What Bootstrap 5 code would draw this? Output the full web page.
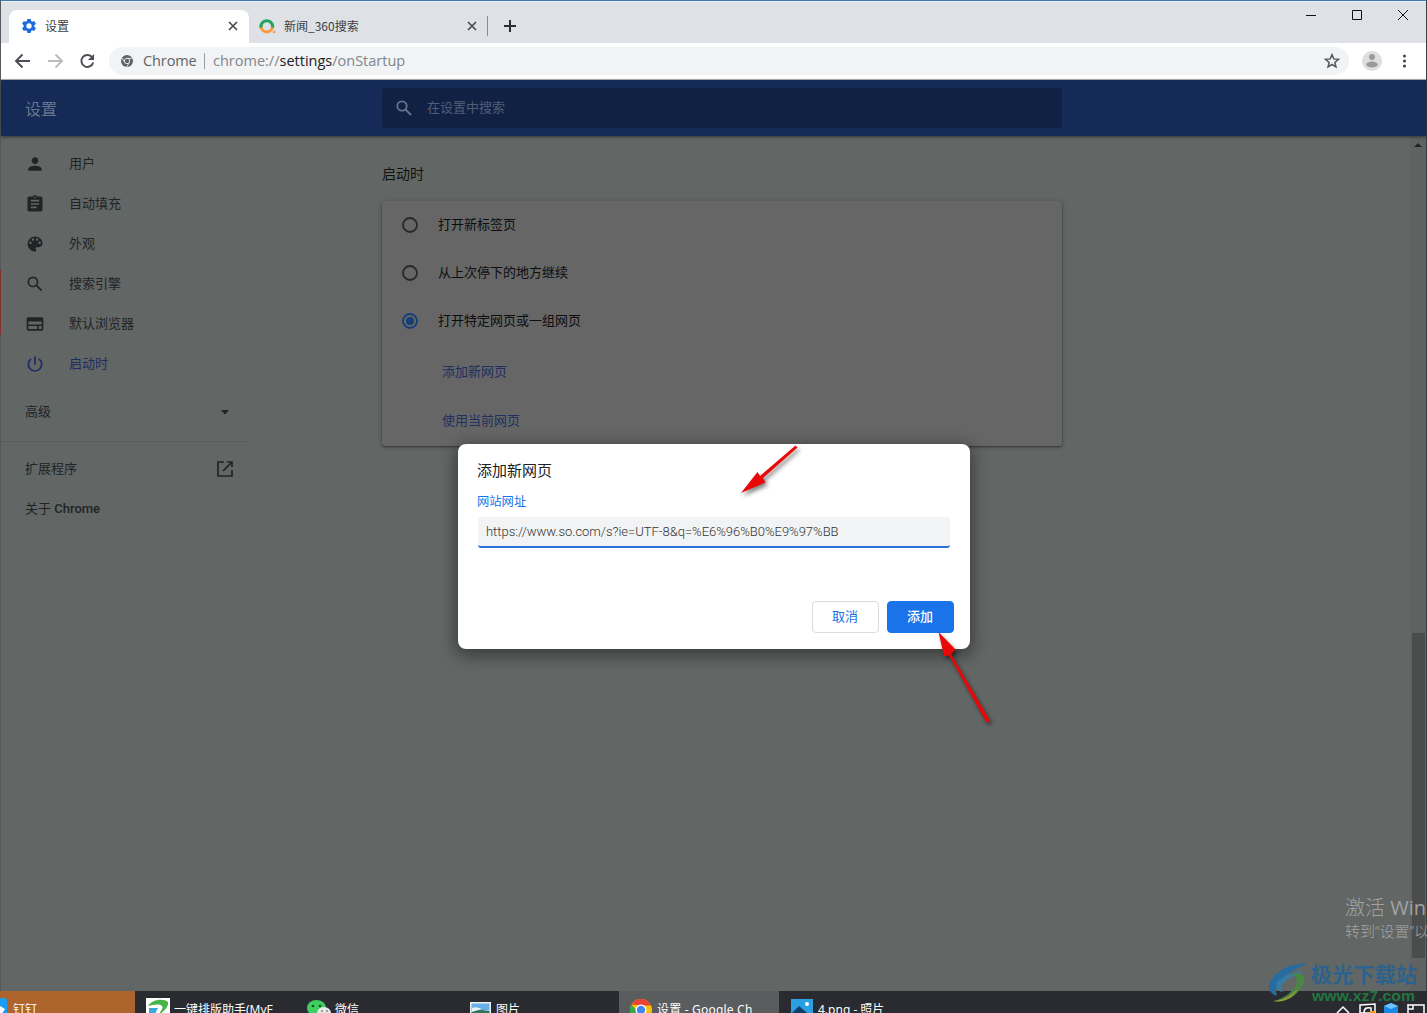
<!DOCTYPE html>
<html lang="zh-CN">
<head>
    <meta charset="UTF-8">
    <meta name="viewport" content="width=device-width, initial-scale=1.0">
    <title>设置</title>
    <link href="https://cdn.jsdelivr.net/npm/bootstrap@5.3.0/dist/css/bootstrap.min.css" rel="stylesheet">
    <style>
        body {
            width: 1427px;
            height: 1013px;
            overflow: hidden;
            background: #626664;
            color: #17191a;
            font-family: Roboto, "Noto Sans CJK SC", sans-serif;
            font-size: 13px;
            line-height: 20px;
        }
        svg { display: block; flex: none; }
        .desk { height: 1013px; }
        .app-window { height: 991px; border-top: 1px solid #3f78ae; border-left: 1px solid #55595b; border-right: 1px solid #3b3e40; }

        /* Tab strip */
        .tab-strip { height: 42px; background: #dee1e6; padding: 8px 0 0 8px; border-top: 1px solid #e9f3fb; }
        .tab { height: 34px; padding-bottom: 2px; font-family: "Noto Sans CJK SC", sans-serif; font-size: 12px; color: #3c4043; }
        .tab-active { width: 240px; background: #fff; border-radius: 8px 8px 0 0; padding: 0 9px 2px 12px; }
        .tab-other { width: 238px; padding: 0 8px 2px 10px; }
        .tab-sep { width: 1px; height: 20px; background: #888c91; }
        .win-buttons { height: 28px; margin-top: -10px; }

        /* Toolbar */
        .toolbar { height: 37px; background: #fff; border-bottom: 1px solid #b4b5b7; }
        .omnibox { width: 1240px; height: 28px; border-radius: 14px; background: #f1f3f4; font-family: "Open Sans", sans-serif; font-size: 14.5px; color: #5f6368; }
        .omni-name { width: 57px; margin-left: 2px; letter-spacing: -.1px; }
        .omni-sep { width: 1px; height: 16px; background: #9a9ea2; }
        .omni-url { color: #80868b; }
        .omni-url b { color: #202124; font-weight: 400; }

        /* Settings header */
        .settings-bar { height: 56px; background: #152a56; color: #69748c; box-shadow: 0 1px 3px rgba(0,0,0,.5); position: relative; }
        .settings-title { width: 381px; padding: 3px 0 0 24px; font-size: 16px; }
        .settings-search { width: 680px; height: 40px; background: #112144; border-radius: 2px; padding-left: 13px; color: #515d76; }
        .search-text { margin-left: 14px; padding-bottom: 1px; }

        /* Side menu */
        .side { width: 248px; padding-top: 8px; color: #202426; }
        .side-item { height: 40px; padding-left: 24px; padding-right: 15px; }
        .side-item svg { margin-right: 24px; }
        .side-item .end-icon { margin-right: 0; }
        .side-active { color: #1d2b66; }
        .side-line { height: 1px; background: #595d5b; margin: 9px 0 7px; }

        /* Startup card */
        .main-col { width: 680px; margin-left: 133px; }
        .main-title { font-size: 14px; padding-top: 28px; height: 65px; color: #101212; }
        .start-card { height: 245px; background: #666; border-radius: 3px; box-shadow: 0 1px 2px rgba(0,0,0,.4), 0 1px 5px rgba(0,0,0,.2); color: #0d0d0e; }
        .start-row { height: 48px; padding-left: 20px; }
        .start-row svg { margin-right: 20px; }
        .start-link { height: 49px; padding: 4px 0 0 60px; color: #202f60; }
        .scroll-track { width: 16px; background: #606261; }
        .scroll-thumb { width: 13px; height: 325px; background: #4b4c4c; margin-top: 485px; }

        /* Dialog */
        .add-dialog { position: absolute; left: 458px; top: 444px; width: 512px; height: 205px; background: #fff; border-radius: 8px; box-shadow: 0 4px 16px 3px rgba(0,0,0,.4); padding: 17px 16px 16px 20px; }
        .dialog-title { font-size: 15px; color: #202124; margin-left: -1px; }
        .dialog-label { font-size: 12.3px; color: #1a73e8; margin: 12px 0 0 -1px; line-height: 18px; }
        .url-box { width: 472px; height: 31px; margin-top: 6px; padding: 0 8px; background: #f1f3f4; border: 0; border-bottom: 2px solid #2a6fdb; border-radius: 3px; color: #333; font-weight: 300; font-size: 13px; letter-spacing: -.02px; outline: 0; }
        .dialog-btn { width: 67px; height: 32px; font-size: 13px; line-height: 18px; padding: 0 1px 1px 0; border-radius: 4px; border: 1px solid #dadce0; color: #1a73e8; background: #fff; }
        .dialog-btn-add { background: #1a73e8; border-color: #1a73e8; color: #fff; font-weight: 500; }
        .arrows { position: absolute; left: 730px; top: 436px; filter: drop-shadow(2px 3px 2px rgba(0,0,0,.5)); }

        /* Taskbar */
        .taskbar { height: 22px; background: #2a2b30; color: #fff; font-family: "Noto Sans", "Noto Sans CJK SC", sans-serif; font-size: 12px; overflow: hidden; }
        .task { height: 38px; white-space: nowrap; flex: none; }
        .task svg { margin-right: 4px; }
        .task-ding { background: #ad642d; width: 135px; }
        .task-ding svg { margin-right: 6px; }
        .task-my { width: 172px; padding-left: 11px; }
        .task-wx { width: 162px; }
        .task-pic { width: 150px; padding-left: 1px; }
        .task-pic svg { margin-right: 5px; }
        .task-chrome { background: #5a5c5e; width: 160px; padding-left: 11px; }
        .task-chrome svg, .task-photo svg { margin-right: 5px; }
        .task-chrome { letter-spacing: .2px; }
        .task-photo { padding-left: 12px; }

        .activate { position: absolute; left: 1345px; top: 893px; width: 82px; overflow: hidden; color: #a1a3a2; font-family: "Open Sans", "Noto Sans CJK SC", sans-serif; font-weight: 300; white-space: nowrap; }
        .activate-big { font-size: 20px; line-height: 30px; }
        .activate-big span { font-weight: 400; }
        .activate-sub { font-size: 15px; line-height: 17px; }
        .site-logo { position: absolute; left: 1266px; top: 958px; }
        .edge-mark { position: absolute; left: 0; top: 270px; width: 1px; height: 65px; background: #84302a; }
    </style>
</head>
<body>
<div class="desk position-relative">
    <div class="app-window d-flex flex-column">
        <!-- Tabs -->
        <div class="tab-strip d-flex align-items-start">
            <div class="tab tab-active d-flex align-items-center">
                <svg width="16" height="16" viewBox="0 0 24 24" fill="#1a6be0"><path fill-rule="evenodd" d="M9.500 1.500h5l.6 3 1.800 1 2.900-1 2.500 4.300-2.300 2.100v2.200l2.300 2.100-2.500 4.300-2.900-1-1.800 1-.6 3h-5l-.6-3-1.800-1-2.900 1-2.500-4.300L4 13.100v-2.200L1.700 8.800l2.500-4.300 2.900 1 1.800-1zM12 8a4 4 0 1 0 0 8 4 4 0 0 0 0-8z"/></svg>
                <span class="ms-2 flex-grow-1">设置</span>
                <svg width="14" height="14" viewBox="0 0 14 14" stroke="#45494d" stroke-width="1.600"><path d="M3 3l8 8M11 3l-8 8"/></svg>
            </div>
            <div class="tab tab-other d-flex align-items-center">
                <svg width="17" height="17" viewBox="0 0 17 17" fill="none" stroke-width="3"><path d="M2 8.500a5.800 5.800 0 0 1 11.600 0" stroke="#1fa762"/><path d="M2 8.200a5.800 5.800 0 0 0 11.600 0" stroke="#f79b3d"/><path d="M2 9.500a5.800 5.800 0 0 1 0-2M13.600 9.500a5.800 5.800 0 0 0 0-2" stroke="#1fa762"/><circle cx="15.200" cy="14" r="1.300" fill="#f79b3d" stroke="none"/></svg>
                <span class="ms-2 flex-grow-1">新闻_360搜索</span>
                <svg width="14" height="14" viewBox="0 0 14 14" stroke="#45494d" stroke-width="1.600"><path d="M3 3l8 8M11 3l-8 8"/></svg>
            </div>
            <div class="tab d-flex align-items-center">
                <div class="tab-sep"></div>
                <svg class="ms-3" width="12" height="12" viewBox="0 0 12 12" stroke="#2b2e31" stroke-width="2"><path d="M6 0v12M0 6h12"/></svg>
            </div>
            <div class="win-buttons d-flex align-items-center ms-auto">
                <svg width="126" height="28" viewBox="0 0 126 28" fill="none" stroke="#111"><path d="M6 15.500h10M52.500 10.500h9v9h-9zM98 10l10 10M108 10l-10 10"/></svg>
            </div>
        </div>

        <!-- Toolbar -->
        <div class="toolbar d-flex align-items-center">
            <svg width="108" height="36" viewBox="0 0 108 36" fill="none" stroke="#4b4f53" stroke-width="1.900">
                <path d="M29 18H15.500M21.500 11.500L15 18l6.500 6.500"/>
                <path d="M47 18h13.500M54.500 11.500L61 18l-6.500 6.500" stroke="#b9bbbe"/>
                <path d="M91.300 14.500a6 6 0 1 0 .9 5"/><path d="M93 11v6h-6z" fill="#4b4f53" stroke="none"/>
            </svg>
            <div class="omnibox d-flex align-items-center">
                <svg class="ms-2" width="20" height="20" viewBox="0 0 20 20" fill="none"><circle cx="10" cy="10" r="6" fill="#5f6368"/><circle cx="10" cy="10" r="2.700" stroke="#dfe1e3" stroke-width="1"/><path d="M10 7.300h5.300M7.700 11.300L5 7M12.300 11.300L9.800 16" stroke="#dfe1e3"/></svg>
                <span class="omni-name ps-1">Chrome</span>
                <div class="omni-sep ms-2 me-2"></div>
                <span class="omni-url flex-grow-1">chrome://<b>settings</b>/onStartup</span>
                <svg class="me-2" width="18" height="18" viewBox="0 0 18 18" fill="none" stroke="#55595d" stroke-width="1.500"><path d="M9 2.600l1.800 4.300 4.700.4-3.600 3.100 1.100 4.600L9 12.500 5 15l1.100-4.600-3.600-3.100 4.700-.4z"/></svg>
            </div>
            <svg class="ms-auto" width="66" height="36" viewBox="0 0 66 36"><circle cx="12" cy="18" r="10" fill="#dddedf"/><circle cx="12" cy="14" r="3" fill="#999"/><ellipse cx="12" cy="21.500" rx="5.700" ry="3" fill="#999"/><g fill="#3f4347"><circle cx="44.500" cy="13" r="1.500"/><circle cx="44.500" cy="18" r="1.500"/><circle cx="44.500" cy="23" r="1.500"/></g></svg>
        </div>

        <!-- Settings header -->
        <div class="settings-bar d-flex align-items-center">
            <div class="settings-title">设置</div>
            <div class="settings-search d-flex align-items-center">
                <svg width="18" height="18" viewBox="0 0 18 18" fill="none" stroke="#68738a" stroke-width="1.800"><circle cx="7" cy="7" r="4.700"/><path d="M10.500 10.500l5.500 5.500"/></svg>
                <span class="search-text">在设置中搜索</span>
            </div>
        </div>

        <!-- Settings page -->
        <div class="d-flex flex-grow-1">
            <nav class="side">
                <div class="side-item d-flex align-items-center">
                    <svg width="20" height="20" viewBox="0 0 24 24" fill="currentColor"><path d="M12 12c2.200 0 4-1.800 4-4s-1.800-4-4-4-4 1.800-4 4 1.800 4 4 4zm0 2c-2.700 0-8 1.300-8 4v2h16v-2c0-2.700-5.300-4-8-4z"/></svg>用户
                </div>
                <div class="side-item d-flex align-items-center">
                    <svg width="20" height="20" viewBox="0 0 24 24" fill="currentColor"><path d="M19 3h-4.200a3 3 0 0 0-5.600 0H5a2 2 0 0 0-2 2v14c0 1.100.9 2 2 2h14a2 2 0 0 0 2-2V5a2 2 0 0 0-2-2zm-7 0a1 1 0 1 1 0 2 1 1 0 0 1 0-2zm2 14H7v-2h7zm3-4H7v-2h10zm0-4H7V7h10z"/></svg>自动填充
                </div>
                <div class="side-item d-flex align-items-center">
                    <svg width="20" height="20" viewBox="0 0 24 24" fill="currentColor"><path d="M12 3a9 9 0 0 0 0 18c.8 0 1.500-.7 1.500-1.500 0-.4-.1-.7-.4-1-.2-.3-.4-.6-.4-1 0-.8.700-1.500 1.500-1.500H16a5 5 0 0 0 5-5c0-4.400-4-8-9-8zm-5.500 9a1.500 1.500 0 1 1 0-3 1.500 1.500 0 0 1 0 3zm3-4a1.500 1.500 0 1 1 0-3 1.500 1.500 0 0 1 0 3zm5 0a1.500 1.500 0 1 1 0-3 1.500 1.500 0 0 1 0 3zm3 4a1.500 1.500 0 1 1 0-3 1.500 1.500 0 0 1 0 3z"/></svg>外观
                </div>
                <div class="side-item d-flex align-items-center">
                    <svg width="20" height="20" viewBox="0 0 24 24" fill="none" stroke="currentColor" stroke-width="2"><circle cx="9.500" cy="9.500" r="5.500"/><path d="M14 14l6 6"/></svg>搜索引擎
                </div>
                <div class="side-item d-flex align-items-center">
                    <svg width="20" height="20" viewBox="0 0 24 24" fill="currentColor"><path fill-rule="evenodd" d="M20 4H4a2 2 0 0 0-2 2v12c0 1.100.9 2 2 2h16a2 2 0 0 0 2-2V6a2 2 0 0 0-2-2zM4 9h16v3.500H4zm0 5.500h10.500V18H4zm12.500 0H20V18h-3.500z"/></svg>默认浏览器
                </div>
                <div class="side-item side-active d-flex align-items-center">
                    <svg width="20" height="20" viewBox="0 0 24 24" fill="none" stroke="currentColor" stroke-width="2"><path d="M12 3v10M7.300 5.900a8 8 0 1 0 9.400 0"/></svg>启动时
                </div>
                <div class="side-item d-flex align-items-center justify-content-between mt-2">
                    高级<svg class="end-icon" width="18" height="18" viewBox="0 0 18 18" fill="currentColor"><path d="M5 7h8l-4 4.500z"/></svg>
                </div>
                <div class="side-line"></div>
                <div class="side-item d-flex align-items-center justify-content-between">
                    扩展程序<svg class="end-icon" width="18" height="18" viewBox="0 0 18 18" fill="none" stroke="currentColor" stroke-width="1.700"><path d="M8 2H2v14h14v-6M11 2h5v5M16 2L7 11"/></svg>
                </div>
                <div class="side-item d-flex align-items-center">关于&nbsp;<span class="fw-medium about-name">Chrome</span></div>
            </nav>

            <div class="main-col">
                <div class="main-title">启动时</div>
                <div class="start-card">
                    <div class="start-row d-flex align-items-center">
                        <svg width="16" height="16" viewBox="0 0 16 16" fill="none" stroke="#262829" stroke-width="1.800"><circle cx="8" cy="8" r="7"/></svg>打开新标签页
                    </div>
                    <div class="start-row d-flex align-items-center">
                        <svg width="16" height="16" viewBox="0 0 16 16" fill="none" stroke="#262829" stroke-width="1.800"><circle cx="8" cy="8" r="7"/></svg>从上次停下的地方继续
                    </div>
                    <div class="start-row d-flex align-items-center">
                        <svg width="16" height="16" viewBox="0 0 16 16" fill="none" stroke="#153d78" stroke-width="1.800"><circle cx="8" cy="8" r="7"/><circle cx="8" cy="8" r="4" fill="#153d78" stroke="none"/></svg>打开特定网页或一组网页
                    </div>
                    <div class="start-link d-flex align-items-center">添加新网页</div>
                    <div class="start-link d-flex align-items-center">使用当前网页</div>
                </div>
            </div>

            <div class="scroll-track ms-auto d-flex flex-column align-items-center">
                <svg width="10" height="12" viewBox="0 0 10 12" fill="#222"><path d="M1 11l4-4 4 4z"/></svg>
                <div class="scroll-thumb"></div>
            </div>
        </div>
    </div>

    <!-- Taskbar -->
    <div class="taskbar d-flex align-items-start">
        <div class="task task-ding d-flex align-items-center">
            <svg width="7" height="24" viewBox="0 0 7 24"><path d="M0 0h4a3 3 0 0 1 3 3v21H0z" fill="#1a9df3"/><path d="M0 8l5 3-4 6H0z" fill="#fff"/></svg>钉钉
        </div>
        <div class="task task-my d-flex align-items-center">
            <svg width="24" height="24" viewBox="0 0 24 24"><path d="M0 0h24v24H0z" fill="#fff"/><path d="M2 8C6 1 18 0 22 4c1 5-4 9-10 14 2-4 6-8 4-10-3-3-9-1-14 0z" fill="#48b548"/><path d="M3 10h9l-5 10H3z" fill="#3ca8d5"/></svg>一键排版助手(MyE
        </div>
        <div class="task task-wx d-flex align-items-center">
            <svg width="24" height="20" viewBox="0 0 24 20"><ellipse cx="9.500" cy="8" rx="9.500" ry="8" fill="#3fce62"/><circle cx="6" cy="6" r="1.300" fill="#184f29"/><circle cx="13" cy="6" r="1.300" fill="#184f29"/><ellipse cx="17" cy="13" rx="7" ry="6" fill="#e9e9e9"/><path d="M14 11h2M19 11h2" stroke="#555"/></svg>微信
        </div>
        <div class="task task-pic d-flex align-items-center">
            <svg width="21" height="16" viewBox="0 0 21 16"><path d="M0 0h21v16H0z" fill="#eee"/><path d="M1.500 1.500h18v7h-18z" fill="#68aee8"/><path d="M1.500 6c5-2 9 3 18 3v6h-18z" fill="#33735e"/><path d="M1.500 6c4-2 9 1 11 1l-11 3z" fill="#e3f3fd"/></svg>图片
        </div>
        <div class="task task-chrome d-flex align-items-center">
            <svg width="22" height="22" viewBox="0 1 22 22"><circle cx="11" cy="12" r="11" fill="#f4c20d"/><path d="M1.500 6.500A11 11 0 0 1 21 7.500H11z" fill="#ea4335"/><path d="M1.500 6.500A11 11 0 0 0 9 23l3-8-6-3z" fill="#34a853"/><circle cx="11" cy="12" r="5.500" fill="#fff"/><circle cx="11" cy="12" r="4.200" fill="#4285f4"/></svg>设置 - Google Ch
        </div>
        <div class="task task-photo d-flex align-items-center">
            <svg width="22" height="22" viewBox="0 0 22 22"><path d="M0 0h22v22H0z" fill="#2aa0e3"/><path d="M0 15l8-8 14 12v3H0z" fill="#123d67"/><circle cx="16" cy="5" r="2" fill="#fff"/></svg>4.png - 照片
        </div>
        <svg class="ms-auto" width="92" height="22" viewBox="0 0 92 22" fill="none" stroke="#fff" stroke-width="1.500"><path d="M2 22l6-6 6 6"/><path d="M25 14l15-1v9H25zM29 22c0-5 3-6 7-5v3"/><path d="M35 20h5v2h-5z" fill="#f39c1d" stroke="none"/><path d="M49 15l7-3 7 3v7H49z" fill="#1588e8" stroke="none"/><path d="M49 15l7 3 7-3-7-3z" fill="#71c1ff" stroke="none"/><path d="M77 14h12v8M73 13v9M73 14h5v4h-5"/></svg>
    </div>

    <!-- Dialog -->
    <div class="add-dialog d-flex flex-column">
        <div class="dialog-title">添加新网页</div>
        <div class="dialog-label">网站网址</div>
        <input class="url-box" type="text" value="https://www.so.com/s?ie=UTF-8&amp;q=%E6%96%B0%E9%97%BB">
        <div class="d-flex justify-content-end gap-2 mt-auto">
            <button class="btn dialog-btn">取消</button>
            <button class="btn dialog-btn dialog-btn-add">添加</button>
        </div>
    </div>

    <svg class="arrows" width="270" height="296" viewBox="730 436 270 296" fill="#e80808">
        <path d="M795.500 445.500l2 2-34.500 30.500 2.500 4.500-24.500 10.500 16.500-21 2.500 4z"/>
        <path d="M938.500 632l17 17.500-4.500 4.500 39 66.500-3.500 2L949 655.500l-5 .5z"/>
    </svg>

    <div class="activate">
        <div class="activate-big">激活 <span>Win</span></div>
        <div class="activate-sub">转到“设置”以</div>
    </div>

    <svg class="site-logo" width="161" height="50" viewBox="0 0 161 50">
        <path d="M42 6C22 4 2 18 3 30c1 5 5 7 8 8-5-12 12-26 31-32z" fill="#276ca0"/>
        <path d="M11 24c8-7 17-11 27-10-8 3-15 5-21 11-3 4-2 7 0 9-6-1-8-5-6-10z" fill="#367da6"/>
        <path d="M26 16c10-3 17 2 9 14-6 9-16 15-28 13 12-2 23-12 24-19 0-4-2-6-5-8z" fill="#498743"/>
        <path d="M7 43c11 0 21-7 25-13-4 9-14 15-25 13z" fill="#a39939"/>
        <text x="45" y="24" textLength="106" font-size="21" font-weight="700" font-family="Noto Sans CJK SC, sans-serif" fill="#2b628e">极光下载站</text>
        <text x="46" y="43" textLength="103" lengthAdjust="spacingAndGlyphs" font-size="15" font-weight="700" font-family="Liberation Sans, sans-serif" fill="#237640">www.xz7.com</text>
    </svg>
    <div class="edge-mark"></div>
</div>
<script src="https://cdn.jsdelivr.net/npm/bootstrap@5.3.0/dist/js/bootstrap.bundle.min.js"></script>
</body>
</html>
